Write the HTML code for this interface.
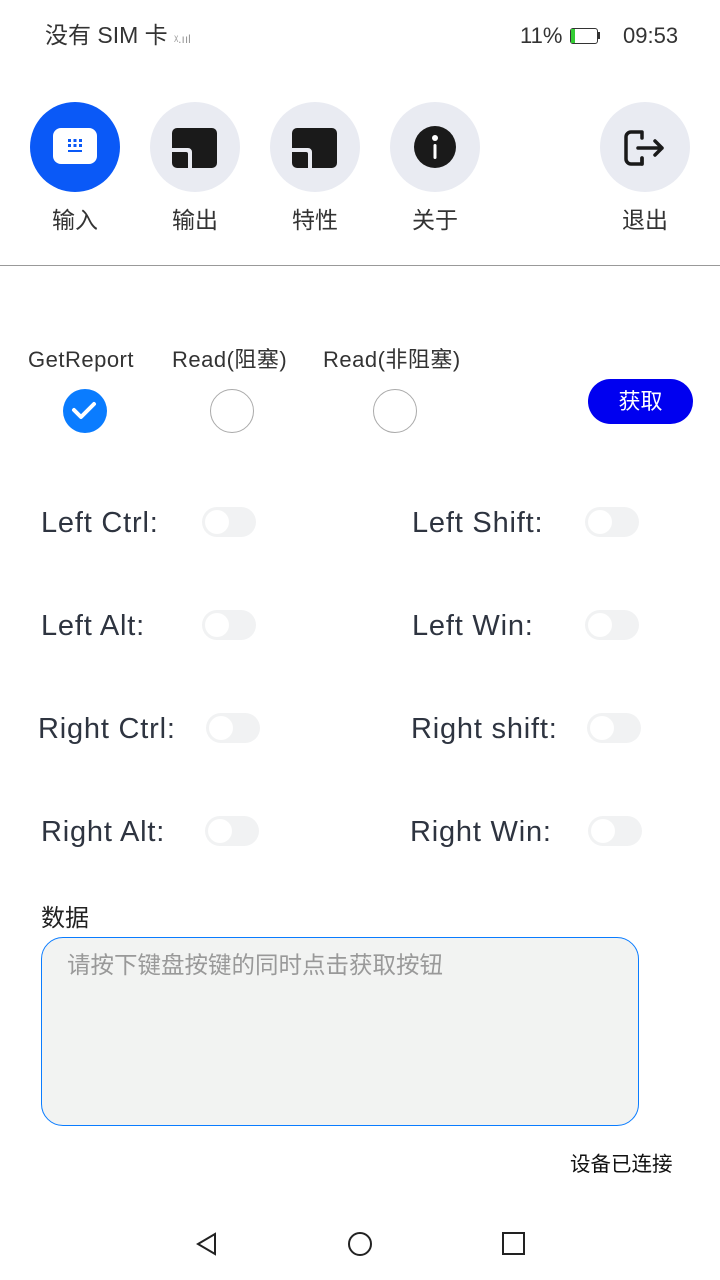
<!DOCTYPE html>
<html><head><meta charset="utf-8"><style>
body{margin:0;width:720px;height:1280px;background:#fff;position:relative;overflow:hidden;font-family:"Liberation Sans","Noto Sans CJK SC",sans-serif;color:#222}
.a{position:absolute}
.c{position:absolute;width:90px;height:90px;border-radius:50%;background:#e9ebf2;top:102px}
.lb{position:absolute;top:205px;font-size:23px;color:#333;width:90px;text-align:center;line-height:30px}
.t{position:absolute;font-size:29px;color:#2e3440;letter-spacing:0.8px;line-height:36px}
.sw{position:absolute;width:54px;height:30px;border-radius:15px;background:#f1f2f3}
.sw:after{content:"";position:absolute;left:3px;top:3px;width:24px;height:24px;border-radius:50%;background:#fff}
.r{position:absolute;font-size:22px;color:#333;top:345px;line-height:30px;letter-spacing:0.5px}
.rad{position:absolute;top:389px;width:44px;height:44px;border-radius:50%;border:1.5px solid #aaa;box-sizing:border-box}
</style></head><body>
<div class="a" style="left:45px;top:20px;font-size:23px;color:#333;line-height:30px">没有 SIM 卡 <span style="font-size:12px;color:#999">ᵡ.ııl</span></div>
<div class="a" style="left:520px;top:21px;font-size:22px;color:#333;line-height:30px">11%</div>
<div class="a" style="left:570px;top:28px;width:26px;height:14px;border:1.5px solid #333;border-radius:3px"><div style="width:4px;height:14px;background:#3c3"></div></div>
<div class="a" style="left:598px;top:32px;width:2px;height:7px;background:#333"></div>
<div class="a" style="left:623px;top:21px;font-size:22px;color:#333;line-height:30px">09:53</div>

<div class="c" style="left:30px;background:#0a59f7"><div class="a" style="left:23px;top:26px;width:44px;height:36px;border-radius:8px;background:#fff">
<svg width="44" height="36"><g fill="#0a59f7"><rect x="15" y="11" width="3" height="3"/><rect x="20.5" y="11" width="3" height="3"/><rect x="26" y="11" width="3" height="3"/><rect x="15" y="16" width="3" height="3"/><rect x="20.5" y="16" width="3" height="3"/><rect x="26" y="16" width="3" height="3"/><rect x="15" y="22" width="14" height="2"/></g></svg></div></div>
<div class="c" style="left:150px"><svg class="a" style="left:22px;top:26px" width="46" height="40"><path d="M6 0H40a5 5 0 0 1 5 5V35a5 5 0 0 1-5 5H20V24a4 4 0 0 0-4-4H0V5a5 5 0 0 1 5-5z" fill="#1a1a1a"/><path d="M0 24H14a2 2 0 0 1 2 2V40H5a5 5 0 0 1-5-5z" fill="#1a1a1a"/></svg></div>
<div class="c" style="left:270px"><svg class="a" style="left:22px;top:26px" width="46" height="40"><path d="M6 0H40a5 5 0 0 1 5 5V35a5 5 0 0 1-5 5H20V24a4 4 0 0 0-4-4H0V5a5 5 0 0 1 5-5z" fill="#1a1a1a"/><path d="M0 24H14a2 2 0 0 1 2 2V40H5a5 5 0 0 1-5-5z" fill="#1a1a1a"/></svg></div>
<div class="c" style="left:390px"><svg class="a" style="left:24px;top:24px" width="42" height="42"><circle cx="21" cy="21" r="21" fill="#1a1a1a"/><circle cx="21" cy="12" r="3" fill="#fff"/><rect x="19.5" y="18" width="3" height="15" rx="1.5" fill="#fff"/></svg></div>
<div class="c" style="left:600px"><svg class="a" style="left:24px;top:28px" width="42" height="36" fill="none" stroke="#1a1a1a" stroke-width="3.5" stroke-linecap="round" stroke-linejoin="round"><path d="M18 2H7a5 5 0 0 0-5 5V29a5 5 0 0 0 5 5H18V28M18 8V2"/><path d="M18 34v-6"/><path d="M14 18H38M31 11l7 7-7 7"/></svg></div>
<div class="lb" style="left:30px">输入</div><div class="lb" style="left:150px">输出</div><div class="lb" style="left:270px">特性</div><div class="lb" style="left:390px">关于</div><div class="lb" style="left:600px">退出</div>
<div class="a" style="left:0;top:265px;width:720px;height:1px;background:#999"></div>

<div class="r" style="left:28px">GetReport</div><div class="r" style="left:172px">Read(阻塞)</div><div class="r" style="left:323px">Read(非阻塞)</div>
<div class="rad" style="left:63px;border:none;background:#0a7cff"><svg width="44" height="44"><path d="M11 21l7 7 13-13" fill="none" stroke="#fff" stroke-width="4" stroke-linecap="round" stroke-linejoin="round"/></svg></div>
<div class="rad" style="left:210px"></div><div class="rad" style="left:373px"></div>
<div class="a" style="left:588px;top:379px;width:105px;height:45px;border-radius:23px;background:#0000f0;color:#fff;font-size:22px;text-align:center;line-height:45px">获取</div>

<div class="t" style="left:41px;top:505px">Left Ctrl:</div><div class="sw" style="left:202px;top:507px"></div>
<div class="t" style="left:412px;top:505px">Left Shift:</div><div class="sw" style="left:585px;top:507px"></div>
<div class="t" style="left:41px;top:608px">Left Alt:</div><div class="sw" style="left:202px;top:610px"></div>
<div class="t" style="left:412px;top:608px">Left Win:</div><div class="sw" style="left:585px;top:610px"></div>
<div class="t" style="left:38px;top:711px">Right Ctrl:</div><div class="sw" style="left:206px;top:713px"></div>
<div class="t" style="left:411px;top:711px">Right shift:</div><div class="sw" style="left:587px;top:713px"></div>
<div class="t" style="left:41px;top:814px">Right Alt:</div><div class="sw" style="left:205px;top:816px"></div>
<div class="t" style="left:410px;top:814px">Right Win:</div><div class="sw" style="left:588px;top:816px"></div>

<div class="a" style="left:41px;top:902px;font-size:24px;color:#222;line-height:34px">数据</div>
<div class="a" style="left:41px;top:937px;width:598px;height:189px;box-sizing:border-box;border:1px solid #0a7cff;border-radius:22px;background:#f2f3f2"><div style="padding:10px 0 0 25px;font-size:23.5px;color:#999;line-height:34px">请按下键盘按键的同时点击获取按钮</div></div>
<div class="a" style="left:570px;top:1150px;font-size:20.5px;color:#111;line-height:30px">设备已连接</div>

<svg class="a" style="left:190px;top:1228px" width="340" height="32" fill="none" stroke="#222" stroke-width="2"><path d="M25 6L8 16 25 26z"/><circle cx="170" cy="16" r="11"/><rect x="313" y="5" width="21" height="21"/></svg>
</body></html>
